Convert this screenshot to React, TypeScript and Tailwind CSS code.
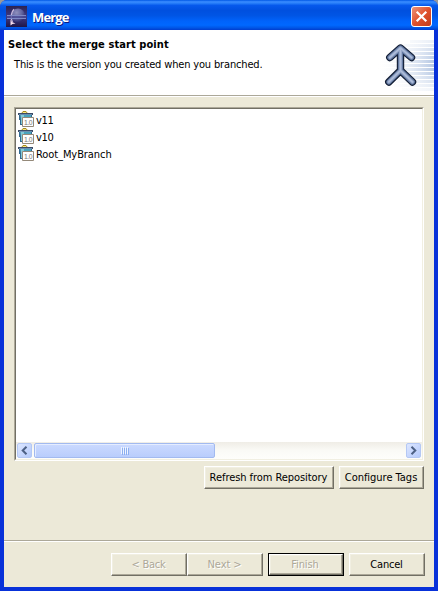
import React from "react";

function EclipseIcon() {
  return (
    <svg width="21" height="21" viewBox="0 0 21 21" className="block shrink-0">
      <defs>
        <linearGradient id="sky" x1="0" x2="0" y1="0" y2="1">
          <stop offset="0" stopColor="#2d2350" />
          <stop offset="0.5" stopColor="#3f3b86" />
          <stop offset="1" stopColor="#1f1648" />
        </linearGradient>
        <radialGradient id="orb" cx="0.4" cy="0.3" r="0.7">
          <stop offset="0" stopColor="#8f90bd" />
          <stop offset="0.55" stopColor="#62649f" />
          <stop offset="1" stopColor="#2c286a" />
        </radialGradient>
      </defs>
      <rect width="21" height="21" fill="url(#sky)" />
      <circle cx="12" cy="9.5" r="7" fill="url(#orb)" />
      <path d="M8 3.2C5 6 4.3 12 6.5 16" fill="none" stroke="#c9b9dc" strokeWidth="1.3" />
      <path d="M4.5 13.5l1.5 2.5 3.5 1.5-3 .5-2 1.5z" fill="#f5dcec" />
      <path d="M1 9.5h19M1 12.5h19" stroke="#7f88c4" strokeWidth="1" />
      <path d="M1 11h19" stroke="#4b4b94" strokeWidth="1.4" />
    </svg>
  );
}

function CloseButton() {
  return (
    <button className="flex h-[21px] w-[21px] items-center justify-center rounded-[3px] border border-white bg-linear-to-br from-[#eb9278] via-[#e0512c] to-[#c23d1c]">
      <svg width="13" height="13" viewBox="0 0 13 13">
        <path d="M1.7 1.7l9.6 9.6M11.3 1.7l-9.6 9.6" stroke="#fff" strokeWidth="2.2" />
      </svg>
    </button>
  );
}

const streaks = [
  [34, 10, 0.3], [28, 14, 0.4], [22, 18, 0.6], [16, 22, 0.75], [10, 26, 0.85], [4, 30, 1],
  [0, 34, 1], [0, 38, 1], [4, 42, 0.9], [6, 46, 0.7], [12, 50, 0.5], [18, 54, 0.35], [26, 58, 0.2],
] as const;

function MergeBanner() {
  const shape = "M24.5 12.5V34.5M13.8 21.5L24.5 12L35.5 21.5M12.8 46L24.5 34.5L36.5 46";
  return (
    <svg width="58" height="64" viewBox="0 0 58 64" className="block shrink-0">
      <defs>
        <linearGradient id="streak" x1="0" x2="58" y1="0" y2="0" gradientUnits="userSpaceOnUse">
          <stop offset="0" stopColor="#fff" stopOpacity="0" />
          <stop offset="1" stopColor="#b5c7e3" />
        </linearGradient>
      </defs>
      {streaks.map(([x, y, opacity]) => (
        <rect key={y} x={x} y={y} width={58 - x} height="3" fill="url(#streak)" opacity={opacity} />
      ))}
      <g transform="translate(0 6)" fill="none" strokeLinecap="round" strokeLinejoin="round">
        <path d={shape} stroke="#111c33" strokeWidth="7.4" />
        <path d={shape} stroke="#5d739c" strokeWidth="5.2" />
        <path d={shape} stroke="#93a5c6" strokeWidth="3.2" />
        <path d={shape} stroke="#b0bedb" strokeWidth="1.4" />
      </g>
    </svg>
  );
}

function VersionIcon() {
  return (
    <svg width="16" height="16" viewBox="0 0 16 16" className="block shrink-0">
      <path d="M3.5 2.5L5 .5h3L9.5 2.5" fill="#f7e77e" stroke="#a68b1d" strokeWidth="1" />
      <path d="M0 2h15v2H0z" fill="#3b4c68" />
      <path d="M1 3h13v1H1z" fill="#6c8fb0" />
      <path d="M1 4h13v5H12v5H2V9H1z" fill="#31688f" />
      <path d="M2 4h11v5H3z" fill="#48a4bd" />
      <path d="M3 4h3v9H3z" fill="#83c9d6" />
      <path d="M4.5 6.5h11v9h-11z" fill="#fff" stroke="#948979" />
      <text x="6" y="13.6" fontFamily="Liberation Sans, sans-serif" fontSize="6.8" fill="#777" textLength="8.5">1.0</text>
    </svg>
  );
}

function ScrollButton({ right = false }: { right?: boolean }) {
  return (
    <div className="flex h-[15px] w-[15px] shrink-0 items-center justify-center rounded-[2px] border border-[#b4c8f4] bg-linear-to-br from-[#dce6ff] to-[#b5cafb]">
      <svg width="7" height="9" viewBox="0 0 7 9" className={right ? "rotate-180" : ""}>
        <path d="M5.5 .7L1.7 4.5l3.8 3.8" fill="none" stroke="#4d6185" strokeWidth="2" />
      </svg>
    </div>
  );
}

type PushButtonProps = { label: string; size: string; text: string; disabled?: boolean; isDefault?: boolean };

function PushButton({ label, size, text, disabled, isDefault }: PushButtonProps) {
  return (
    <button disabled={disabled} className={`shrink-0 ${size} ${isDefault ? "border border-black" : ""}`}>
      <span className="flex h-full w-full items-center justify-center border border-t-white border-l-white border-r-[#716f64] border-b-[#716f64] shadow-[inset_-1px_-1px_0_#aca899,inset_1px_1px_0_#f1efe2]">
        <span className={`whitespace-nowrap leading-[14px] ${text} ${disabled ? "text-[#aca899] [text-shadow:1px_1px_0_#fff]" : "text-black"}`}>{label}</span>
      </span>
    </button>
  );
}

const tags = [
  { name: "v11", tracking: "tracking-[-0.3px]" },
  { name: "v10", tracking: "tracking-[-0.3px]" },
  { name: "Root_MyBranch", tracking: "tracking-[-0.08px]" },
];

export default function App() {
  return (
    <div className="h-[591px] w-[438px] overflow-hidden bg-[#9a9a9a] font-['DejaVu_Sans_Condensed','DejaVu_Sans',sans-serif] text-[11px] text-black">
      <div className="flex h-full flex-col overflow-hidden rounded-t-[7px] bg-[#0831d9]">
        <header className="flex h-[30px] shrink-0 items-center bg-[linear-gradient(180deg,#0058e6_0%,#3a8cff_6%,#2b82fb_10%,#0659ec_18%,#0050df_35%,#0055e5_52%,#0063fb_70%,#0068ff_84%,#0057e8_92%,#003dcf_100%)] pt-[2px] pl-[6px] pr-[6px]">
          <EclipseIcon />
          <h1 className="mt-px ml-[5px] flex-1 font-['Open_Sans',sans-serif] text-[13px] leading-[18px] font-bold tracking-[-0.85px] text-white [text-shadow:1px_1px_0_#0a1883]">Merge</h1>
          <CloseButton />
        </header>

        <div className="flex min-h-0 flex-1 border-r-4 border-b-4 border-l-4 border-r-[#0831d9] border-b-[#0831d9] border-l-[#0831d9] bg-[#ece9d8]">
          <main className="flex min-w-0 flex-1 flex-col">
            <section className="flex h-[65px] shrink-0 bg-white">
              <div className="flex-1 pt-[8px] pl-[4px]">
                <h2 className="whitespace-nowrap leading-[14px] font-bold tracking-[0.08px]">Select the merge start point</h2>
                <p className="mt-[6px] ml-[6px] whitespace-nowrap leading-[14px] tracking-[-0.16px]">This is the version you created when you branched.</p>
              </div>
              <MergeBanner />
            </section>
            <div className="h-[2px] shrink-0 border-t border-b border-t-[#aca899] border-b-white" />

            <div className="mt-[10px] ml-[10px] flex h-[354px] w-[410px] shrink-0 flex-col border border-t-[#aca899] border-r-white border-b-white border-l-[#aca899]">
              <div className="flex flex-1 flex-col border border-t-[#716f64] border-r-[#f1efe2] border-b-[#f1efe2] border-l-[#716f64] bg-white">
                <ul className="flex-1 pt-[2px]">
                  {tags.map((tag) => (
                    <li key={tag.name} className="flex h-[17px] items-start pl-[2px]">
                      <VersionIcon />
                      <span className={`ml-[2px] mt-[3px] leading-[14px] ${tag.tracking}`}>{tag.name}</span>
                    </li>
                  ))}
                </ul>
                <div className="flex h-[17px] items-center bg-linear-to-b from-[#efede6] via-[#fafaf6] to-[#fefefb] px-px">
                  <ScrollButton />
                  <div className="ml-[2px] flex h-[15px] w-[181px] items-center justify-center gap-px rounded-[2px] border border-[#a2baf0] bg-linear-to-b from-[#cbdaff] to-[#b9cdfc] shadow-[inset_1px_1px_0_#e5edff]">
                    {[0, 1, 2, 3].map((grip) => (
                      <span key={grip} className="h-[7px] w-px bg-[#eef4ff] shadow-[1px_1px_0_#8caff0]" />
                    ))}
                  </div>
                  <div className="flex-1" />
                  <ScrollButton right />
                </div>
              </div>
            </div>

            <div className="mt-[5px] ml-[200px] flex gap-[5px]">
              <PushButton label="Refresh from Repository" size="h-[23px] w-[130px]" text="tracking-[-0.06px] -ml-px" />
              <PushButton label="Configure Tags" size="h-[23px] w-[85px]" text="tracking-[-0.02px] -ml-px" />
            </div>

            <div className="mt-auto h-[2px] shrink-0 border-t border-b border-t-[#aca899] border-b-white" />
            <footer className="flex h-[45px] shrink-0 pt-[11px] pl-[107px]">
              <PushButton label="< Back" size="h-[23px] w-[76px]" text="tracking-[-0.25px] -ml-px" disabled />
              <PushButton label="Next >" size="h-[23px] w-[76px]" text="tracking-[-0.1px] -ml-px" disabled />
              <div className="ml-[5px] mr-[5px] flex">
                <PushButton label="Finish" size="h-[23px] w-[76px]" text="tracking-[-0.1px] -ml-[2px]" disabled isDefault />
              </div>
              <PushButton label="Cancel" size="h-[23px] w-[76px]" text="tracking-[-0.2px] -ml-px" />
            </footer>
          </main>
        </div>
      </div>
    </div>
  );
}
